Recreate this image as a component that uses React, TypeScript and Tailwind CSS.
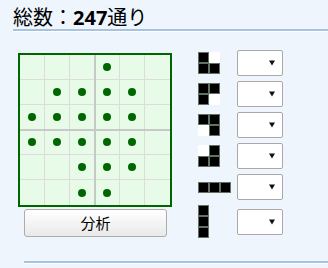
import React from "react";

const dots: number[][] = [
  [3],
  [1, 2, 3, 4],
  [0, 1, 2, 3, 4],
  [0, 1, 2, 3, 4],
  [2, 3, 4],
  [2, 3],
];

// 1 = black cell, 0 = white
const pieces: number[][][] = [
  [
    [1, 0],
    [1, 1],
  ],
  [
    [1, 1],
    [1, 0],
  ],
  [
    [1, 1],
    [0, 1],
  ],
  [
    [0, 1],
    [1, 1],
  ],
  [[1, 1, 1]],
  [[1], [1], [1]],
];

function Piece({ shape }: { shape: number[][] }) {
  return (
    <div className="flex w-fit flex-col bg-white">
      {shape.map((row, r) => (
        <div key={r} className="flex">
          {row.map((v, c) =>
            v ? (
              <div key={c} className="h-[11px] w-[11px] border border-[#627262] bg-black" />
            ) : (
              <div key={c} className="h-[11px] w-[11px] bg-white" />
            )
          )}
        </div>
      ))}
    </div>
  );
}

function Select() {
  return (
    <div className="flex h-[26px] w-[46px] items-center justify-end rounded-[2px] border border-[#a9a9a9] bg-white pr-[7px]">
      <svg width="6" height="6" viewBox="0 0 6 6">
        <path d="M0 0.5 H6 L3 5.5 Z" fill="#111" />
      </svg>
    </div>
  );
}

export default function App() {
  return (
    <main
      className="h-[268px] w-[328px] overflow-hidden bg-[#eef5fc] text-black"
      style={{ fontFamily: '"Noto Sans", "Noto Sans CJK JP", sans-serif' }}
    >
      <h1 className="ml-[13px] border-b-2 border-[#a7c3e2] pt-[7px] text-[20px] leading-[22px] shadow-[0_1px_0_#ffffff]">
        総数：<span className="font-bold">247</span>通り
      </h1>

      <div className="mt-[22px] flex">
        <div className="ml-[18px] flex flex-col">
          <div className="relative border-2 border-[#006600] bg-[#e8fbe8]">
            <div className="grid grid-cols-[repeat(6,25px)] grid-rows-[repeat(6,25px)]">
              {dots.map((cols, r) =>
                [0, 1, 2, 3, 4, 5].map((c) => (
                  <div
                    key={`${r}-${c}`}
                    className={
                      "flex items-center justify-center border-[#dcdcdc] " +
                      (c < 5 ? "border-r " : "") +
                      (r < 5 ? "border-b" : "")
                    }
                  >
                    {cols.includes(c) && <div className="h-[8px] w-[8px] rounded-full bg-[#006600]" />}
                  </div>
                ))
              )}
            </div>
            <div className="absolute top-0 bottom-0 left-[74px] w-[2px] bg-[#c8c8c8]" />
            <div className="absolute left-0 right-0 top-[74px] h-[2px] bg-[#c8c8c8]" />
          </div>
          <button className="mt-[2px] ml-[6px] h-[28px] w-[143px] rounded-[3px] border border-[#acacac] bg-gradient-to-b from-white to-[#e9e9e9] text-[15px]">
            分析
          </button>
        </div>

        <div className="ml-[26px] mt-[-3px] flex flex-col gap-[5px]">
          {pieces.map((p, i) => (
            <div key={i} className="flex min-h-[26px] items-center">
              <div className="w-[39px]">
                <Piece shape={p} />
              </div>
              <Select />
            </div>
          ))}
        </div>
      </div>

      <div className="ml-[24px] mt-[23px] h-[2px] bg-[#a7c3e2] shadow-[0_1px_0_#ffffff]" />
    </main>
  );
}
